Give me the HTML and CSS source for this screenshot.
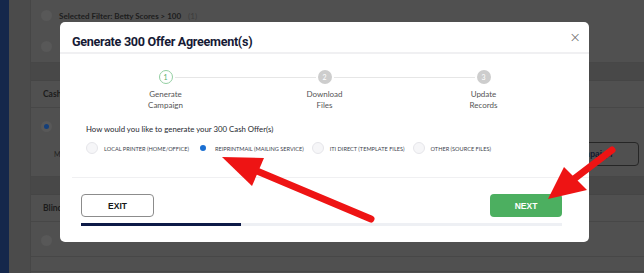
FILE: index.html
```html
<!DOCTYPE html>
<html lang="en">
<head>
    <meta charset="UTF-8">
    <meta name="viewport" content="width=device-width, initial-scale=1.0">
    <title>Generate Offer Agreements</title>
    <link rel="stylesheet" href="styles.css">
</head>
<body>
    <aside class="sidebar"></aside>

    <main class="page">
        <section class="panel">
            <div class="filter-row">
                <span class="radio"></span>
                <b>Selected Filter: Betty Scores &gt; 100</b>
                <span class="count">(1)</span>
            </div>
            <div class="filter-row">
                <span class="radio"></span>
            </div>
        </section>
        <div class="band"></div>
        <section class="panel">
            <div class="panel-head">Cash Offer</div>
            <div class="panel-body">
                <div class="filter-row"><span class="radio checked"></span></div>
                <div class="meta-row">
                    <span class="meta">M</span>
                    <button class="ghost-btn">Campaign</button>
                </div>
            </div>
        </section>
        <div class="band"></div>
        <section class="panel">
            <div class="panel-head">Blind Offer</div>
            <div class="panel-body short">
                <div class="filter-row"><span class="radio"></span></div>
            </div>
            <div class="panel-foot"></div>
        </section>
    </main>

    <div class="backdrop">
        <div class="modal">
            <div class="modal-header">
                <h2>Generate 300 Offer Agreement(s)</h2>
                <button class="close">&times;</button>
            </div>

            <div class="modal-body">
                <div class="stepper">
                    <div class="step active">
                        <div class="step-top"><span class="dot">1</span></div>
                        <div class="step-label">Generate<br>Campaign</div>
                    </div>
                    <div class="step">
                        <div class="step-top"><span class="dot">2</span></div>
                        <div class="step-label">Download<br>Files</div>
                    </div>
                    <div class="step">
                        <div class="step-top"><span class="dot">3</span></div>
                        <div class="step-label">Update<br>Records</div>
                    </div>
                </div>

                <p class="question">How would you like to generate your 300 Cash Offer(s)</p>

                <div class="options">
                    <label class="option"><span class="opt-radio"></span>Local Printer (Home/Office)</label>
                    <label class="option"><span class="opt-radio selected"></span>REIPrintMail (Mailing Service)</label>
                    <label class="option"><span class="opt-radio"></span>ITI Direct (Template Files)</label>
                    <label class="option"><span class="opt-radio"></span>Other (Source Files)</label>
                </div>
            </div>

            <div class="modal-footer">
                <div class="actions">
                    <button class="btn btn-exit">EXIT</button>
                    <button class="btn btn-next">NEXT</button>
                </div>
                <div class="progress"><div class="progress-fill" style="width: 33.3%;"></div></div>
            </div>
        </div>
    </div>

    <svg class="arrows" width="644" height="273" viewBox="0 0 644 273">
        <line x1="371" y1="219" x2="250" y2="168" stroke="#ee1414" stroke-width="7" stroke-linecap="round"/>
        <polygon points="222,157 264,158 252,186" fill="#ee1414"/>
        <line x1="612" y1="150" x2="570" y2="182" stroke="#ee1414" stroke-width="7" stroke-linecap="round"/>
        <polygon points="548,199 587,190 564,167" fill="#ee1414"/>
    </svg>
</body>
</html>
```

FILE: styles.css
```css
body {
    margin: 0;
    width: 644px;
    height: 273px;
    overflow: hidden;
    display: flex;
    background-color: #4b4b4b;
    font-family: Lato, "Open Sans", sans-serif;
}

.sidebar {
    width: 9px;
    background-color: #15274b;
}

.page {
    flex: 1;
    height: 273px;
    overflow: hidden;
    margin-left: 21px;
    border-left: 1px solid #464646;
    background-color: #505050;
}

.panel {
    border-bottom: 1px solid #474747;
}

.filter-row {
    height: 31px;
    display: flex;
    align-items: center;
    gap: 7px;
    padding-left: 10px;
    font-size: 8px;
    color: #1d1d1d;
}

.count {
    color: #3c3c3c;
}

.radio {
    width: 11px;
    height: 11px;
    border-radius: 50%;
    background-color: #585858;
    box-sizing: border-box;
}

.radio.checked {
    border: 3px solid #585858;
    background-color: #143f7a;
}

.band {
    height: 17px;
    background-color: #484848;
    border-bottom: 1px solid #454545;
}

.panel-head {
    height: 26px;
    line-height: 26px;
    padding-left: 12px;
    font-size: 8.5px;
    font-weight: bold;
    color: #1c1c1c;
    border-bottom: 1px solid #474747;
}

.panel-body {
    height: 68px;
    padding-top: 3px;
    box-sizing: border-box;
}

.panel-body.short {
    height: 35px;
    border-bottom: 1px solid #474747;
}

.panel-foot {
    height: 14px;
}

.meta-row {
    display: flex;
    align-items: center;
    justify-content: space-between;
    padding-left: 23px;
    padding-right: 5px;
    font-size: 7px;
    color: #222;
}

.ghost-btn {
    width: 94px;
    height: 24px;
    background: transparent;
    border: 1px solid #262626;
    border-radius: 4px;
    font-family: "Liberation Sans", Arial, sans-serif;
    font-size: 8.5px;
    font-weight: bold;
    color: #141a2e;
}

/* modal */
.backdrop {
    position: fixed;
    top: 0;
    left: 0;
    width: 100%;
    height: 100%;
    padding: 22px 0 0 60px;
    box-sizing: border-box;
}

.modal {
    width: 529px;
    height: 220px;
    background-color: #fff;
    border-radius: 5px;
    display: flex;
    flex-direction: column;
}

.modal-header {
    height: 30px;
    display: flex;
    align-items: center;
    justify-content: space-between;
    padding: 0 8px 0 12px;
    border-bottom: 2px solid #f0f0f2;
}

.modal-header h2 {
    margin: 8px 0 0;
    font-family: Roboto, "Liberation Sans", sans-serif;
    font-size: 12.6px;
    font-weight: bold;
    letter-spacing: -0.3px;
    color: #161a35;
}

.close {
    background: none;
    border: none;
    padding: 0;
    font-family: "DejaVu Sans", sans-serif;
    font-size: 14px;
    font-weight: 300;
    line-height: 1;
    color: #666;
    margin-top: 0;
}

.modal-body {
    padding: 16px 26px 0;
}

.stepper {
    display: grid;
    grid-template-columns: repeat(3, 159px);
}

.step-top {
    display: flex;
    align-items: center;
}

.step-top::before,
.step-top::after {
    content: "";
    flex: 1;
    height: 1px;
    background-color: #e6e6e6;
}

.step-top::before {
    margin-right: 2px;
}

.step-top::after {
    margin-left: 2px;
}

.step:first-child .step-top::before,
.step:last-child .step-top::after {
    background-color: transparent;
}

.dot {
    width: 14px;
    height: 14px;
    border-radius: 50%;
    box-sizing: border-box;
    background-color: #cdcdcd;
    color: #fff;
    font-size: 7px;
    display: flex;
    align-items: center;
    justify-content: center;
}

.step.active .dot {
    background-color: #fff;
    border: 1px solid #93cfa2;
    color: #56b06c;
}

.step-label {
    margin-top: 5px;
    text-align: center;
    font-size: 8px;
    line-height: 11px;
    color: #555;
}

.question {
    margin: 13px 0 0;
    font-size: 7.8px;
    line-height: 11px;
    color: #26282f;
}

.options {
    display: flex;
    gap: 8px;
    margin-top: 7px;
}

.option {
    display: flex;
    align-items: center;
    gap: 6px;
    font-size: 5.6px;
    text-transform: uppercase;
    color: #3c3f4e;
    white-space: nowrap;
}

.opt-radio {
    width: 12px;
    height: 12px;
    border-radius: 50%;
    box-sizing: border-box;
    border: 1px solid #e6e6ea;
    background-color: #f6f6f8;
}

.opt-radio.selected {
    border: 3.5px solid #fff;
    background-color: #1a6fd2;
}

.modal-footer {
    margin: 23px 0 0 12px;
    border-top: 1px solid #f0f0f2;
    padding: 16px 27px 0 9px;
}

.actions {
    display: flex;
    justify-content: space-between;
    align-items: center;
}

.btn {
    height: 23px;
    border-radius: 4px;
    font-family: "Liberation Sans", Arial, sans-serif;
    font-size: 8.5px;
    font-weight: bold;
    cursor: pointer;
}

.btn-exit {
    width: 73px;
    background-color: #fff;
    border: 1px solid #8c8c8c;
    color: #161616;
}

.btn-next {
    width: 72px;
    background-color: #4caf60;
    border: none;
    color: #fff;
}

.progress {
    margin-top: 6px;
    height: 3px;
    background-color: #eef0f4;
}

.progress-fill {
    height: 100%;
    background-color: #0d1a47;
}

.arrows {
    position: fixed;
    top: 0;
    left: 0;
    pointer-events: none;
}
```
